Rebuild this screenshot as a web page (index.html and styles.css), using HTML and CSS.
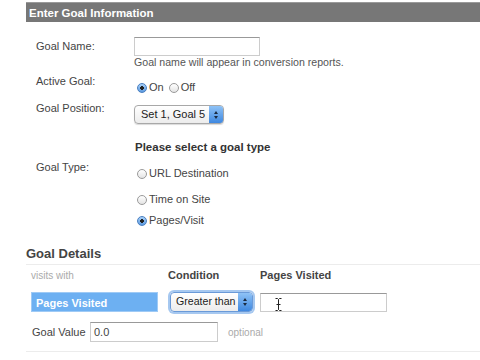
FILE: index.html
```html
<!doctype html>
<html>
    <head>
        <meta charset="utf-8">
        <title>Enter Goal Information</title>
        <link rel="stylesheet" href="styles.css">
    </head>
    <body>
    <div class="page">
        <div class="bar">Enter Goal Information</div>

        <div class="row row-name">
            <div class="label">Goal Name:</div>
            <div class="field"><div class="text-box name-box"></div></div>
        </div>
        <div class="row">
            <div class="label"></div>
            <div class="field hint">Goal name will appear in conversion reports.</div>
        </div>

        <div class="row row-active">
            <div class="label">Active Goal:</div>
            <div class="field radios">
                <span class="radio checked"></span><span class="opt">On</span>
                <span class="radio"></span><span class="opt">Off</span>
            </div>
        </div>

        <div class="row row-position">
            <div class="label">Goal Position:</div>
            <div class="field">
                <div class="select"><span class="select-text">Set 1, Goal 5</span><span class="stepper"><i class="up"></i><i class="down"></i></span></div>
            </div>
        </div>

        <div class="row row-prompt">
            <div class="label"></div>
            <div class="field prompt">Please select a goal type</div>
        </div>

        <div class="row row-type">
            <div class="label type-label">Goal Type:</div>
            <div class="field types">
                <div class="type-opt"><span class="radio"></span><span class="opt">URL Destination</span></div>
                <div class="type-opt time"><span class="radio"></span><span class="opt">Time on Site</span></div>
                <div class="type-opt pages"><span class="radio checked"></span><span class="opt">Pages/Visit</span></div>
            </div>
        </div>

        <div class="details-title">Goal Details</div>
        <div class="details">
            <div class="col-heads">
                <div class="col-a faint">visits with</div>
                <div class="col-b">Condition</div>
                <div class="col-c">Pages Visited</div>
            </div>
            <div class="cond-row">
                <div class="col-a"><div class="picked">Pages Visited</div></div>
                <div class="col-b">
                    <div class="select focus"><span class="select-text">Greater than</span><span class="stepper"><i class="up"></i><i class="down"></i></span></div>
                </div>
                <div class="col-c">
                    <div class="text-box pages-box">
                        <svg class="ibeam" width="7" height="13" viewBox="0 0 7 13"><path d="M0.5 0.5h2l1 1 1-1h2M3.5 1.5v10M0.5 12.5h2l1-1 1 1h2M1.5 6.5h4" stroke="#222" stroke-width="1" fill="none"/></svg>
                    </div>
                </div>
            </div>
            <div class="value-row">
                <div class="value-label">Goal Value</div>
                <div class="text-box value-box">0.0</div>
                <div class="faint optional">optional</div>
            </div>
        </div>
    </div>
    </body>
</html>
```

FILE: styles.css
```css
body {
    margin: 0;
    background: #fff;
    font-family: "Liberation Sans", Arial, sans-serif;
    font-size: 11px;
    color: #444;
}
.page {
    padding-left: 26px;
    padding-top: 2px;
}
.bar {
    height: 20px;
    line-height: 20px;
    background: #777;
    border-top: 1px solid #9a9a9a;
    box-sizing: border-box;
    color: #fff;
    font-weight: bold;
    font-size: 11.5px;
    padding-left: 3px;
}
.row {
    display: flex;
    align-items: center;
}
.label {
    width: 98px;
    padding-left: 10px;
    flex: none;
    line-height: 13px;
}
.row-name {
    margin-top: 15px;
}
.text-box {
    box-sizing: border-box;
    border: 1px solid #ccc;
    border-top-color: #999;
    background: #fff;
}
.name-box {
    width: 126px;
    height: 19px;
}
.hint {
    line-height: 13px;
    font-size: 10.6px;
    color: #555;
}
.row-active {
    margin-top: 6px;
    align-items: flex-start;
}
.radios {
    display: flex;
    align-items: center;
    padding-top: 6px;
}
.radio {
    display: inline-block;
    width: 10px;
    height: 10px;
    box-sizing: border-box;
    border-radius: 50%;
    border: 1px solid #9a9a9a;
    background: linear-gradient(#fff, #e4e4e4);
    margin-right: 2px;
    margin-left: 3px;
    flex: none;
}
.radio.checked {
    border-color: #4a7fc0;
    background: radial-gradient(circle, #222 0, #222 1.6px, transparent 2px), linear-gradient(#a8d0f8, #5c9ae0);
}
.opt {
    line-height: 13px;
    margin-right: 2px;
}
.row-position {
    margin-top: 8px;
    align-items: flex-start;
}
.row-position .field {
    padding-top: 3px;
}
.select {
    display: inline-flex;
    align-items: stretch;
    height: 19px;
    box-sizing: border-box;
    border: 1px solid #a8a8a8;
    border-radius: 4px;
    background: linear-gradient(#fff, #ececec);
    box-shadow: 0 1px 1px rgba(0, 0, 0, 0.15);
    overflow: hidden;
}
.select-text {
    padding: 0 4px 0 6px;
    line-height: 17px;
    color: #222;
}
.stepper {
    width: 14px;
    background: linear-gradient(#8ec2f6, #3f88e0);
    display: flex;
    flex-direction: column;
    align-items: center;
    justify-content: center;
    gap: 2px;
}
.stepper i {
    display: block;
    width: 0;
    height: 0;
    border-left: 2.5px solid transparent;
    border-right: 2.5px solid transparent;
}
.stepper .up {
    border-bottom: 3px solid #1a2a40;
}
.stepper .down {
    border-top: 3px solid #1a2a40;
}
.row-prompt {
    margin-top: 16px;
}
.prompt {
    font-weight: bold;
    font-size: 11.5px;
    color: #333;
    line-height: 14px;
    padding-left: 1px;
}
.row-type {
    align-items: flex-start;
    margin-top: 4px;
}
.type-label {
    padding-top: 3px;
}
.types {
    display: flex;
    flex-direction: column;
}
.type-opt {
    display: flex;
    align-items: center;
    line-height: 13px;
    margin-top: 9px;
}
.type-opt.time {
    margin-top: 13px;
}
.type-opt.pages {
    margin-top: 8px;
}
.details-title {
    margin-top: 19px;
    font-weight: bold;
    font-size: 13px;
    color: #444;
    line-height: 16px;
}
.details {
    border-top: 1px solid #ececec;
    border-bottom: 1px solid #ececec;
    margin-top: 2px;
    padding-bottom: 9px;
}
.col-heads, .cond-row {
    display: flex;
    align-items: center;
}
.col-heads {
    height: 20px;
    font-weight: bold;
}
.col-a {
    width: 137px;
    padding-left: 5px;
    flex: none;
}
.col-b {
    width: 92px;
    flex: none;
}
.faint {
    color: #aaa;
    font-weight: normal;
    font-size: 10px;
}
.cond-row {
    margin-top: 7px;
}
.picked {
    width: 127px;
    height: 20px;
    line-height: 20px;
    box-sizing: border-box;
    background: #6db0f2;
    border: 1px solid #9fcaf5;
    color: #fff;
    font-weight: bold;
    padding-left: 4px;
}
.col-b .select {
    margin-left: 2px;
    height: 20px;
}
.col-b .select-text {
    padding: 0 3px 0 5px;
    font-size: 10.6px;
}
.select.focus {
    border-color: #6a9ad8;
    box-shadow: 0 0 0 2px #a6c8f0;
}
.pages-box {
    width: 127px;
    height: 19px;
    padding: 4px 0 0 14px;
}
.ibeam {
    display: block;
}
.value-row {
    display: flex;
    align-items: center;
    margin-top: 10px;
    padding-left: 6px;
}
.value-label {
    width: 58px;
}
.value-box {
    width: 128px;
    height: 20px;
    line-height: 18px;
    padding-left: 3px;
    color: #444;
}
.optional {
    margin-left: 10px;
}
```
